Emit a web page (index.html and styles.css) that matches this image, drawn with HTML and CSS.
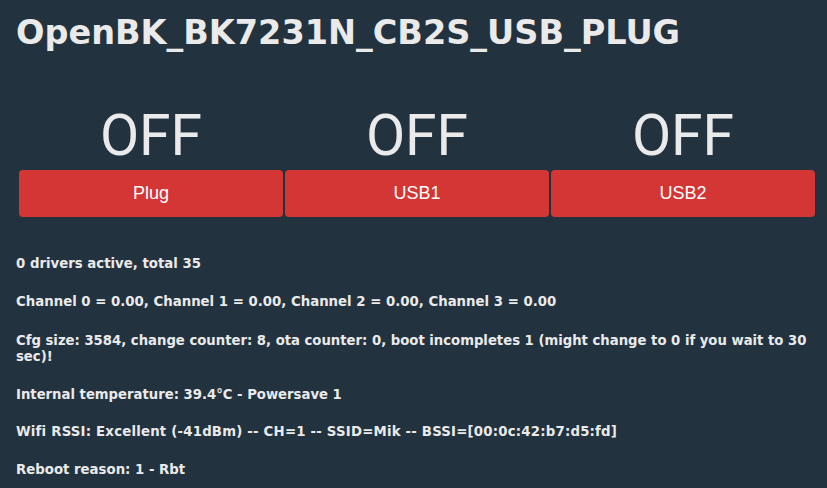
FILE: index.html
```html
<!DOCTYPE html>
<html>
<head>
<meta charset="utf-8">
<title>OpenBK_BK7231N_CB2S_USB_PLUG</title>
<link rel="stylesheet" href="styles.css">
</head>
<body>
<div class="page">
  <h1 class="title">OpenBK_BK7231N_CB2S_USB_PLUG</h1>
  <div class="relays">
    <div class="relay">
      <div class="state">OFF</div>
      <button class="toggle">Plug</button>
    </div>
    <div class="relay">
      <div class="state">OFF</div>
      <button class="toggle">USB1</button>
    </div>
    <div class="relay">
      <div class="state">OFF</div>
      <button class="toggle">USB2</button>
    </div>
  </div>
  <div class="info">
    <p class="line">0 drivers active, total 35</p>
    <p class="line">Channel 0 = 0.00, Channel 1 = 0.00, Channel 2 = 0.00, Channel 3 = 0.00</p>
    <p class="line narrow">Cfg size: 3584, change counter: 8, ota counter: 0, boot incompletes 1 (might change to 0 if you wait to 30 sec)!</p>
    <p class="line narrow">Internal temperature: 39.4°C - Powersave 1</p>
    <p class="line wide">Wifi RSSI: Excellent (-41dBm) -- CH=1 -- SSID=Mik -- BSSI=[00:0c:42:b7:d5:fd]</p>
    <p class="line">Reboot reason: 1 - Rbt</p>
  </div>
</div>
</body>
</html>
```
FILE: styles.css
```css
html, body {
  margin: 0;
  padding: 0;
  background: #22323f;
}

body {
  color: #eaeaea;
  font-family: "DejaVu Sans", Verdana, sans-serif;
  width: 827px;
  height: 488px;
  overflow: hidden;
}

.page {
  padding: 13px 9px 0 16px;
}

.title {
  margin: 0;
  font-size: 33.5px;
  line-height: 40px;
  font-weight: bold;
  color: #eaeaea;
}

.relays {
  display: grid;
  grid-template-columns: repeat(3, 1fr);
  column-gap: 2px;
  margin: 51px 3px 0 3px;
}

.relay {
  display: flex;
  flex-direction: column;
  align-items: stretch;
}

.state {
  font-family: Roboto, "Liberation Sans", Arial, sans-serif;
  font-size: 57px;
  line-height: 64px;
  text-align: center;
  color: #eaeaea;
  margin-bottom: 2px;
}

.toggle {
  display: block;
  height: 47px;
  border: 0;
  border-radius: 4px;
  background: #d43535;
  color: #ffffff;
  font-family: "Liberation Sans", Arial, sans-serif;
  font-size: 18px;
  padding: 0;
}

.info {
  margin-top: 39px;
}

.line {
  margin: 0 0 22px 0;
  font-size: 13.3px;
  line-height: 16px;
  font-weight: bold;
  color: #eaeaea;
}

.narrow {
  font-family: "DejaVu Sans Condensed", "DejaVu Sans", sans-serif;
  font-stretch: condensed;
  font-size: 14.7px;
}

.wide {
  letter-spacing: 0.2px;
}
```
